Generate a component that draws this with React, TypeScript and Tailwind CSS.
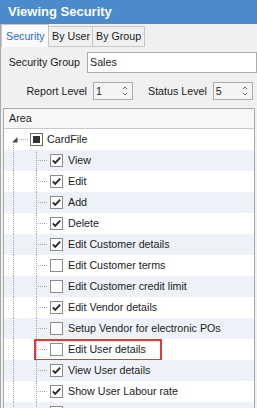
import React from "react";

type Item = { label: string; checked: boolean; redbox?: boolean };

const items: Item[] = [
  { label: "View", checked: true },
  { label: "Edit", checked: true },
  { label: "Add", checked: true },
  { label: "Delete", checked: true },
  { label: "Edit Customer details", checked: true },
  { label: "Edit Customer terms", checked: false },
  { label: "Edit Customer credit limit", checked: false },
  { label: "Edit Vendor details", checked: true },
  { label: "Setup Vendor for electronic POs", checked: false },
  { label: "Edit User details", checked: false, redbox: true },
  { label: "View User details", checked: true },
  { label: "Show User Labour rate", checked: true },
  { label: "", checked: true },
];

function Spin({ value }: { value: string }) {
  return (
    <div className="h-[18px] w-[40px] border border-[#acacac] bg-[#f4f4f4] flex items-center justify-between pl-[2px] pr-[4px]">
      <span>{value}</span>
      <svg width="6" height="12" viewBox="0 0 6 12">
        <path d="M0.8 4.2 L3 2 L5.2 4.2" fill="none" stroke="#6b6b6b" strokeWidth="1" />
        <path d="M0.8 7.8 L3 10 L5.2 7.8" fill="none" stroke="#6b6b6b" strokeWidth="1" />
      </svg>
    </div>
  );
}

function CheckBox({ checked }: { checked: boolean }) {
  return (
    <div className="w-[13px] h-[13px] border border-[#8c8c8c] bg-white flex items-center justify-center shrink-0">
      {checked && (
        <svg width="11" height="11" viewBox="0 0 11 11">
          <path d="M1.8 5.4 L4.2 7.9 L9.2 2.6" fill="none" stroke="#2a2a2a" strokeWidth="1.9" />
        </svg>
      )}
    </div>
  );
}

export default function App() {
  return (
    <div className="w-[257px] h-[408px] overflow-hidden bg-[#f0f0f0] font-['Liberation_Sans',Arial,sans-serif] text-[10.7px] text-[#1b1b1b] flex flex-col">
      <div className="h-[24px] shrink-0 bg-[#4b8bcb] text-white font-bold text-[13px] pl-[8px] flex items-center">
        Viewing Security
      </div>
      <div className="flex-1 flex flex-col border-l border-[#a9a9a9] min-h-0">
        {/* tabs */}
        <div className="h-[23px] shrink-0 flex items-end">
          <div className="h-[23px] w-[48px] border border-b-0 border-[#c6c6c6] bg-[#fafafa] text-[#1f6fc5] flex items-center pl-[4px]">
            Security
          </div>
          <div className="h-[21px] w-[44px] border border-l-0 border-[#c6c6c6] flex items-center pl-[3px]">
            By User
          </div>
          <div className="h-[21px] w-[52px] border border-l-0 border-[#c6c6c6] flex items-center pl-[3px]">
            By Group
          </div>
        </div>
        {/* form */}
        <div className="flex items-center mt-[5px] shrink-0">
          <div className="w-[85px] text-right">Security Group</div>
          <div className="ml-[7px] h-[21px] w-[170px] shrink-0 border border-[#acacac] bg-white flex items-center pl-[2px]">
            Sales
          </div>
        </div>
        <div className="flex items-center mt-[9px] shrink-0">
          <div className="w-[86px] text-right">Report Level</div>
          <div className="ml-[6px]">
            <Spin value="1" />
          </div>
          <div className="ml-[15px]">Status Level</div>
          <div className="ml-[6px]">
            <Spin value="5" />
          </div>
        </div>
        {/* grid */}
        <div className="mt-[8px] ml-[2px] w-[252px] flex-1 min-h-0 overflow-hidden border border-b-0 border-[#a9a9a9] bg-white">
          <div className="h-[20px] bg-[#f7f7f7] border-b border-[#c9c9c9] flex items-center pl-[5px]">
            Area
          </div>
          {/* root */}
          <div className="h-[21px] flex items-center">
            <svg width="26" height="21" viewBox="0 0 26 21" className="shrink-0">
              <path d="M13.5 8 L13.5 13.5 L8 13.5 Z" fill="#444" />
              <path d="M9.5 15 L9.5 21" stroke="#a5a5a5" strokeWidth="1" strokeDasharray="1 1" />
              <path d="M15 10.5 L25 10.5" stroke="#a5a5a5" strokeWidth="1" strokeDasharray="1 1" />
            </svg>
            <div className="w-[13px] h-[13px] border border-[#6d6d6d] bg-white flex items-center justify-center shrink-0">
              <div className="w-[7px] h-[7px] bg-[#333]" />
            </div>
            <span className="ml-[4px]">CardFile</span>
          </div>
          {items.map((it, i) => (
            <div
              key={i}
              className={`relative h-[21px] flex items-center ${i % 2 === 0 ? "bg-[#eef2f8]" : "bg-white"}`}
            >
              <svg width="46" height="21" viewBox="0 0 46 21" className="shrink-0">
                <path d="M9.5 0 L9.5 21" stroke="#a5a5a5" strokeWidth="1" strokeDasharray="1 1" />
                <path d="M32.5 0 L32.5 21" stroke="#a5a5a5" strokeWidth="1" strokeDasharray="1 1" />
                <path d="M34 10.5 L44 10.5" stroke="#a5a5a5" strokeWidth="1" strokeDasharray="1 1" />
              </svg>
              <CheckBox checked={it.checked} />
              {it.label && <span className="ml-[5px] whitespace-nowrap">{it.label}</span>}
              {it.redbox && (
                <div className="absolute left-[30px] top-0 w-[128px] h-[22px] border-2 border-[#e53a33]" />
              )}
            </div>
          ))}
        </div>
      </div>
    </div>
  );
}
